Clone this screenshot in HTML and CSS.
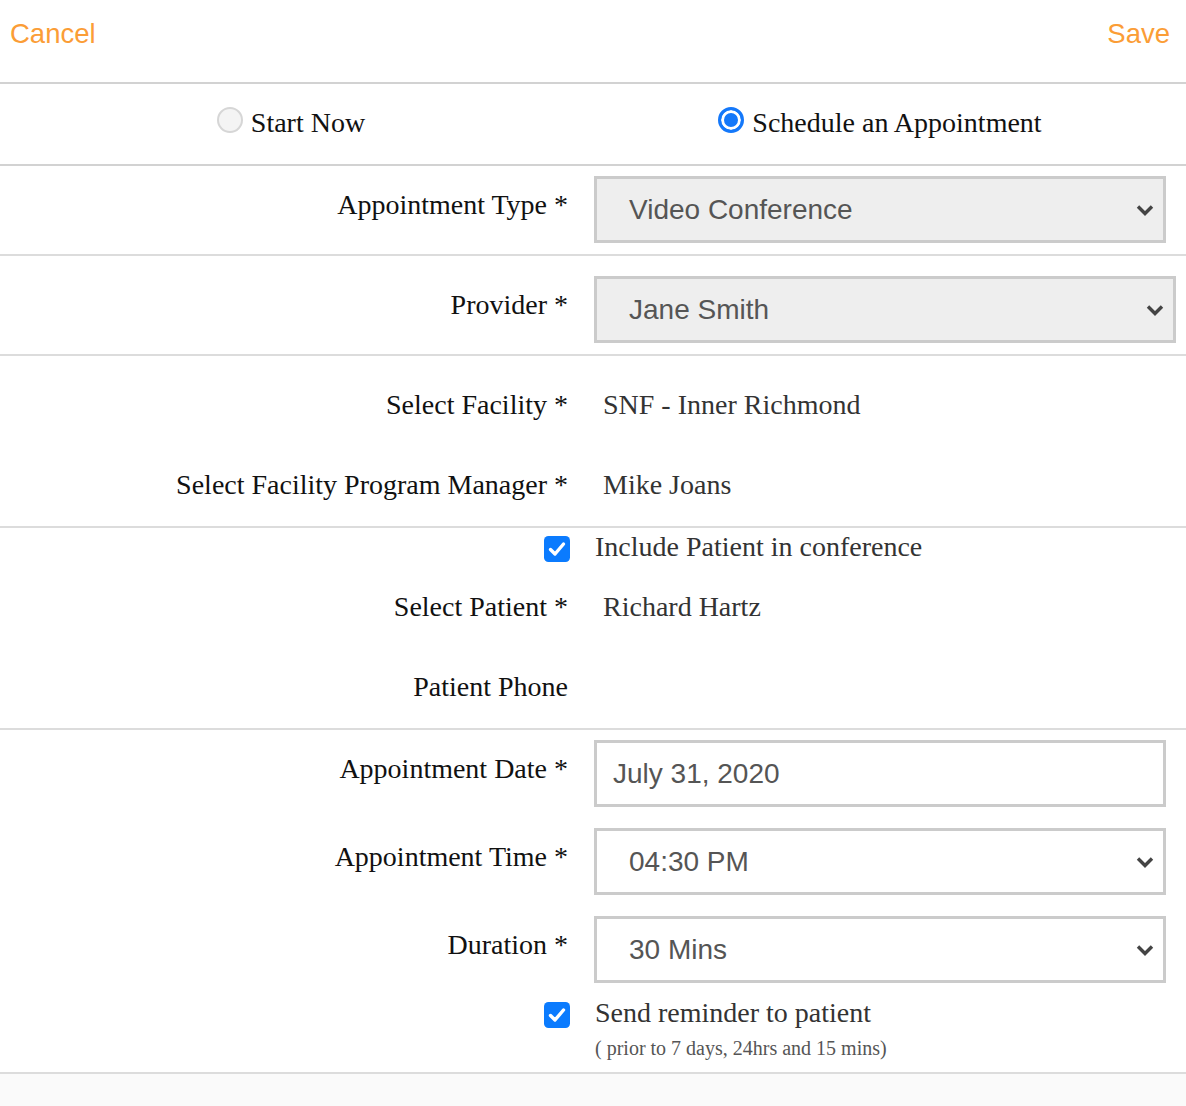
FILE: index.html
```html
<!DOCTYPE html>
<html lang="en">
<head>
<meta charset="utf-8">
<title>Schedule an Appointment</title>
<link rel="stylesheet" href="styles.css">
</head>
<body>
<div class="page">
  <header class="topbar">
    <a class="action">Cancel</a>
    <a class="action">Save</a>
  </header>

  <div class="mode">
    <label class="mode-opt"><span class="radio"></span><span>Start Now</span></label>
    <label class="mode-opt"><span class="radio radio-on"></span><span>Schedule an Appointment</span></label>
  </div>

  <section class="group group-type">
    <div class="field">
      <div class="label label-ctrl">Appointment Type *</div>
      <div class="select select-grey">
        <span>Video Conference</span>
        <svg class="chev" viewBox="0 0 18 12" width="18" height="12"><path d="M2 2.5 L9 9.5 L16 2.5" fill="none" stroke="#444" stroke-width="3.4"/></svg>
      </div>
    </div>
  </section>

  <section class="group group-provider">
    <div class="field field-wide">
      <div class="label label-ctrl">Provider *</div>
      <div class="select select-grey">
        <span>Jane Smith</span>
        <svg class="chev" viewBox="0 0 18 12" width="18" height="12"><path d="M2 2.5 L9 9.5 L16 2.5" fill="none" stroke="#444" stroke-width="3.4"/></svg>
      </div>
    </div>
  </section>

  <section class="group group-facility">
    <div class="field">
      <div class="label">Select Facility *</div>
      <div class="value">SNF - Inner Richmond</div>
    </div>
    <div class="field field-gap">
      <div class="label">Select Facility Program Manager *</div>
      <div class="value">Mike Joans</div>
    </div>
  </section>

  <section class="group group-patient">
    <div class="field">
      <div class="check-cell">
        <svg class="check" viewBox="0 0 26 26" width="26" height="26"><rect x="0" y="0" width="26" height="26" rx="4.5" fill="#0b7bfe"/><path d="M6.5 13.5 L11 18 L19.5 8" fill="none" stroke="#fff" stroke-width="3.4" stroke-linecap="round" stroke-linejoin="round"/></svg>
      </div>
      <div class="check-text">Include Patient in conference</div>
    </div>
    <div class="field field-gap-sm">
      <div class="label">Select Patient *</div>
      <div class="value">Richard Hartz</div>
    </div>
    <div class="field field-gap">
      <div class="label">Patient Phone</div>
      <div class="value"></div>
    </div>
  </section>

  <section class="group group-time">
    <div class="field">
      <div class="label label-ctrl">Appointment Date *</div>
      <div class="textbox">July 31, 2020</div>
    </div>
    <div class="field field-gap-ctrl">
      <div class="label label-ctrl">Appointment Time *</div>
      <div class="select">
        <span>04:30 PM</span>
        <svg class="chev" viewBox="0 0 18 12" width="18" height="12"><path d="M2 2.5 L9 9.5 L16 2.5" fill="none" stroke="#444" stroke-width="3.4"/></svg>
      </div>
    </div>
    <div class="field field-gap-ctrl">
      <div class="label label-ctrl">Duration *</div>
      <div class="select">
        <span>30 Mins</span>
        <svg class="chev" viewBox="0 0 18 12" width="18" height="12"><path d="M2 2.5 L9 9.5 L16 2.5" fill="none" stroke="#444" stroke-width="3.4"/></svg>
      </div>
    </div>
    <div class="field field-gap-rem">
      <div class="check-cell check-cell-rem">
        <svg class="check" viewBox="0 0 26 26" width="26" height="26"><rect x="0" y="0" width="26" height="26" rx="4.5" fill="#0b7bfe"/><path d="M6.5 13.5 L11 18 L19.5 8" fill="none" stroke="#fff" stroke-width="3.4" stroke-linecap="round" stroke-linejoin="round"/></svg>
      </div>
      <div class="reminder">
        <div class="check-text">Send reminder to patient</div>
        <div class="note">( prior to 7 days, 24hrs and 15 mins)</div>
      </div>
    </div>
  </section>

  <div class="footer"></div>
</div>
</body>
</html>
```

FILE: styles.css
```css
* { box-sizing: border-box; }

body {
  margin: 0;
  font-family: "Liberation Serif", "Times New Roman", serif;
  color: #111;
  background: #fafafa;
}

.page {
  background: #fff;
}

.topbar {
  height: 84px;
  display: flex;
  justify-content: space-between;
  align-items: flex-start;
  padding: 18px 16px 0 10px;
  border-bottom: 2px solid #d2d2d2;
  font-family: "Liberation Sans", Arial, sans-serif;
  font-size: 27.5px;
  line-height: 31px;
}

.action {
  color: #fb9d36;
  cursor: pointer;
}

.mode {
  height: 82px;
  display: grid;
  grid-template-columns: 582px 1fr;
  padding-right: 8px;
  border-bottom: 2px solid #d2d2d2;
  font-size: 28px;
  line-height: 32px;
}

.mode-opt {
  display: flex;
  align-items: center;
  justify-content: center;
  gap: 8px;
  padding-bottom: 3px;
}

.radio {
  width: 26px;
  height: 26px;
  border-radius: 50%;
  border: 2px solid #d6d6d6;
  background: #f4f4f4;
  margin-bottom: 5px;
  flex: none;
}

.radio-on {
  border: 3px solid #1478fa;
  background: #1478fa;
  box-shadow: inset 0 0 0 3px #fff;
}

.group {
  border-bottom: 2px solid #dcdcdc;
}

.group-type { padding: 10px 0 11px; }
.group-provider { padding: 20px 0 11px; }
.group-facility { padding: 33px 0 25px; }
.group-patient { padding: 3px 0 25px; }
.group-time { padding: 10px 0 12px; }

.field {
  display: grid;
  grid-template-columns: 568px 1fr;
  column-gap: 26px;
  align-items: start;
  padding-right: 20px;
}

.field-wide { padding-right: 10px; }
.field-gap { margin-top: 48px; }
.field-gap-sm { margin-top: 28px; }
.field-gap-ctrl { margin-top: 21px; }
.field-gap-rem { margin-top: 14px; }

.label {
  text-align: right;
  font-size: 28px;
  line-height: 32px;
  color: #111;
  white-space: nowrap;
}

.label-ctrl {
  padding-top: 13px;
}

.value {
  font-size: 28px;
  line-height: 32px;
  min-height: 32px;
  color: #333;
  padding-left: 9px;
}

.select,
.textbox {
  height: 67px;
  display: flex;
  align-items: center;
  border: 3px solid #cbcbcb;
  background: #fff;
  font-family: "Liberation Sans", Arial, sans-serif;
  font-size: 28px;
  color: #555;
}

.select {
  justify-content: space-between;
  padding: 0 9px 0 32px;
}

.select-grey {
  background: #eeeeee;
}

.textbox {
  padding-left: 16px;
}

.chev {
  display: block;
  margin-top: 1px;
}

.check-cell {
  display: flex;
  justify-content: flex-end;
  margin-right: -2px;
  padding-top: 5px;
}

.check-cell-rem {
  padding-top: 5px;
}

.check {
  display: block;
}

.check-text {
  font-size: 28px;
  line-height: 32px;
  color: #333;
  padding-left: 1px;
}

.note {
  margin-top: 7px;
  font-size: 20px;
  line-height: 24px;
  color: #555;
  padding-left: 1px;
}

.footer {
  height: 40px;
  background: #fafafa;
}
```
